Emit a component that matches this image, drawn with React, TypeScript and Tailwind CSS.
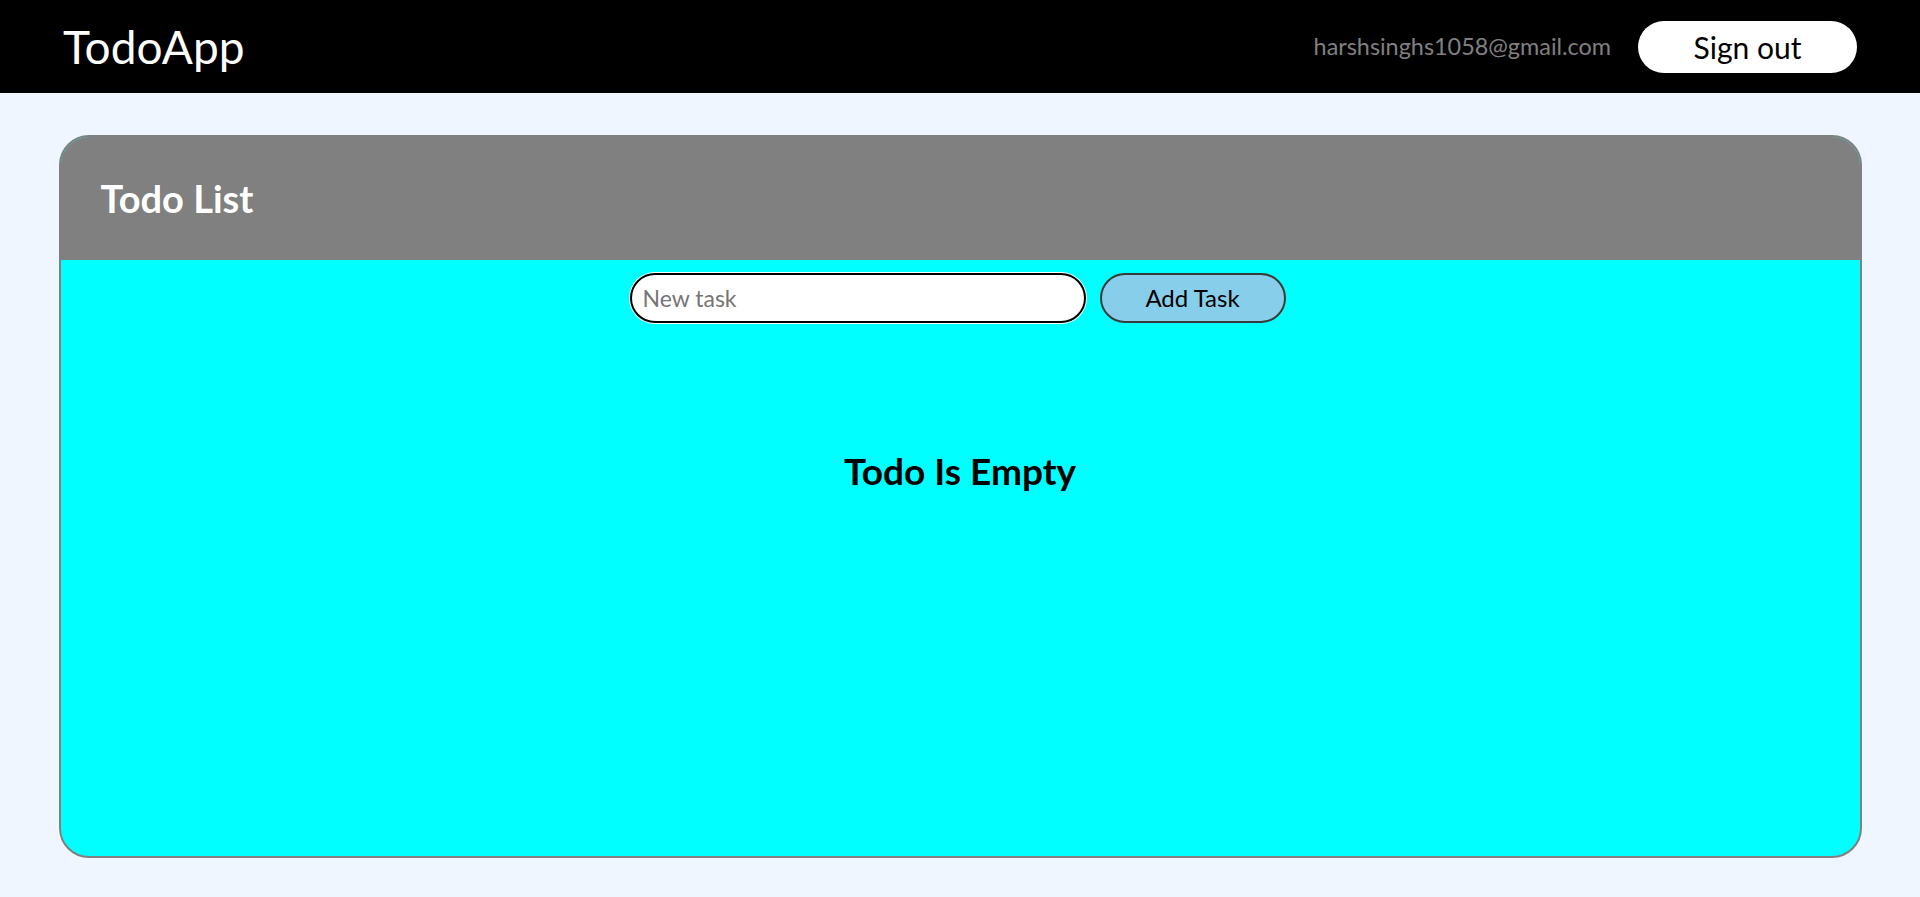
import { useState } from "react";

const font = { fontFamily: 'Lato, "Open Sans", sans-serif' };

const Navbar = () => {
    return (
        <nav className="h-[93px] bg-black flex items-center justify-between pl-[63px] pr-[63px]">
            <span className="text-[46px] text-white leading-none">TodoApp</span>
            <div className="flex items-center gap-[27px]">
                <span className="text-[23.4px] text-[#808080]">harshsinghs1058@gmail.com</span>
                <button className="w-[219px] h-[52px] rounded-full bg-white text-black text-[30px] leading-none">
                    Sign out
                </button>
            </div>
        </nav>
    );
};

const App = () => {
    const [task, setTask] = useState("");
    const [todos, setTodos] = useState<string[]>([]);

    const addTask = (e: React.FormEvent) => {
        e.preventDefault();
        if (!task.trim()) return;
        setTodos([...todos, task.trim()]);
        setTask("");
    };

    return (
        <div className="min-h-screen bg-[#eff6ff]" style={font}>
            <Navbar />
            <div className="w-[1803px] h-[723px] mx-auto mt-[42px] rounded-[30px] border-2 border-[#808080] bg-[#00ffff] overflow-hidden flex flex-col">
                <div className="h-[123px] bg-[#808080] flex items-center pl-[40px]">
                    <h1 className="text-[38px] font-bold text-white">Todo List</h1>
                </div>
                <div className="flex-1 flex flex-col">
                    <form onSubmit={addTask} className="flex justify-center gap-[14px] mt-[13px] pr-[5px]">
                        <input
                            value={task}
                            onChange={(e) => setTask(e.target.value)}
                            placeholder="New task"
                            className="w-[456px] h-[50px] rounded-full border-2 border-black bg-white px-[11px] text-[23px] text-black placeholder:text-[#757575] outline-none ring-1 ring-white"
                        />
                        <button
                            type="submit"
                            className="w-[186px] h-[50px] rounded-full border-2 border-[#3a3a3a] bg-[#87ceeb] text-black text-[24px]"
                        >
                            Add Task
                        </button>
                    </form>
                    {todos.length === 0 ? (
                        <h2 className="mt-[120px] text-center text-[37px] font-bold text-black">Todo Is Empty</h2>
                    ) : (
                        <ul className="mt-8 flex flex-col items-center gap-2">
                            {todos.map((t, i) => (
                                <li key={i} className="text-[24px]">{t}</li>
                            ))}
                        </ul>
                    )}
                </div>
            </div>
        </div>
    );
};

export default App;
